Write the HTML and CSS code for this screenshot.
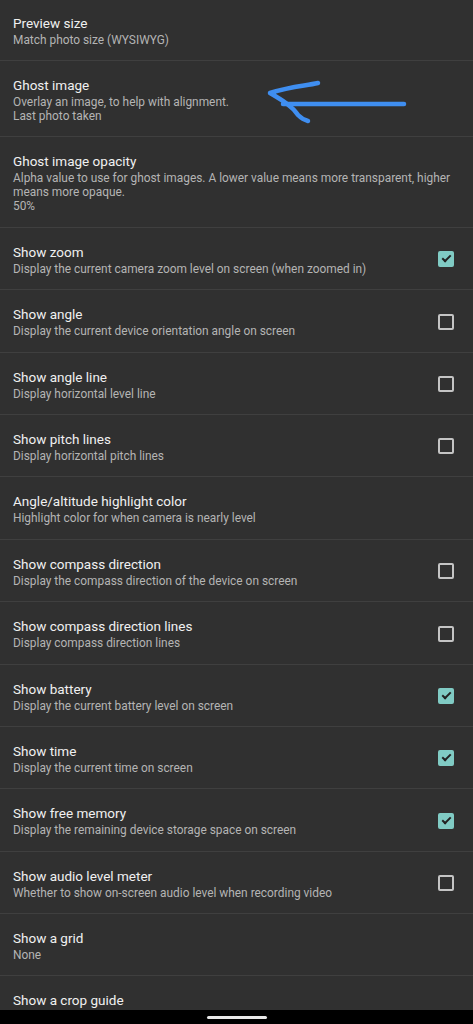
FILE: index.html
```html
<!DOCTYPE html>
<html>
<head>
<meta charset="utf-8">
<link rel="stylesheet" href="styles.css">
</head>
<body>
<div class="list">
  <div class="row first"><div class="text"><div class="title">Preview size</div><div class="summary">Match photo size (WYSIWYG)</div></div></div>
  <div class="row"><div class="text"><div class="title">Ghost image</div><div class="summary">Overlay an image, to help with alignment.<br>Last photo taken</div></div></div>
  <div class="row"><div class="text"><div class="title">Ghost image opacity</div><div class="summary">Alpha value to use for ghost images. A lower value means more transparent, higher means more opaque.<br>50%</div></div></div>
  <div class="row"><div class="text"><div class="title">Show zoom</div><div class="summary">Display the current camera zoom level on screen (when zoomed in)</div></div><span class="cb on"></span></div>
  <div class="row"><div class="text"><div class="title">Show angle</div><div class="summary">Display the current device orientation angle on screen</div></div><span class="cb"></span></div>
  <div class="row"><div class="text"><div class="title">Show angle line</div><div class="summary">Display horizontal level line</div></div><span class="cb"></span></div>
  <div class="row"><div class="text"><div class="title">Show pitch lines</div><div class="summary">Display horizontal pitch lines</div></div><span class="cb"></span></div>
  <div class="row"><div class="text"><div class="title">Angle/altitude highlight color</div><div class="summary">Highlight color for when camera is nearly level</div></div></div>
  <div class="row"><div class="text"><div class="title">Show compass direction</div><div class="summary">Display the compass direction of the device on screen</div></div><span class="cb"></span></div>
  <div class="row"><div class="text"><div class="title">Show compass direction lines</div><div class="summary">Display compass direction lines</div></div><span class="cb"></span></div>
  <div class="row"><div class="text"><div class="title">Show battery</div><div class="summary">Display the current battery level on screen</div></div><span class="cb on"></span></div>
  <div class="row"><div class="text"><div class="title">Show time</div><div class="summary">Display the current time on screen</div></div><span class="cb on"></span></div>
  <div class="row"><div class="text"><div class="title">Show free memory</div><div class="summary">Display the remaining device storage space on screen</div></div><span class="cb on"></span></div>
  <div class="row"><div class="text"><div class="title">Show audio level meter</div><div class="summary">Whether to show on-screen audio level when recording video</div></div><span class="cb"></span></div>
  <div class="row"><div class="text"><div class="title">Show a grid</div><div class="summary">None</div></div></div>
  <div class="row"><div class="text"><div class="title">Show a crop guide</div><div class="summary">None</div></div></div>
</div>
<svg class="arrow" width="473" height="140" viewBox="0 0 473 140">
  <path d="M283 104 L404 104" />
  <path d="M318 83 C305 86 292 86 270 93 C282 100 292 106 298 115 C301 118 304 120 308 121" />
</svg>
<div class="navbar"><span class="pill"></span></div>
</body>
</html>
```
FILE: styles.css
```css
html, body {
  margin: 0;
  padding: 0;
  background: #303030;
  overflow: hidden;
}
body {
  width: 473px;
  height: 1024px;
  font-family: Roboto, "Noto Sans", sans-serif;
  position: relative;
}
.list {
  margin-top: -1.4px;
}
.row {
  display: flex;
  align-items: center;
  padding: 14px 12px 13.4px 13px;
  border-bottom: 1px solid #3f3f3f;
}
.text {
  flex: 1;
  min-width: 0;
}
.title {
  font-size: 13.5px;
  line-height: 20px;
  color: #f0f0f0;
}
.summary {
  font-size: 11.9px;
  line-height: 14px;
  color: #b4b4b4;
}
.cb {
  flex: none;
  width: 16px;
  height: 16px;
  box-sizing: border-box;
  border: 2px solid #c4c4c4;
  border-radius: 2px;
  margin-left: 16px;
  margin-right: 7px;
  margin-top: 1px;
  position: relative;
}
.cb.on {
  background: #80cbc4;
  border-color: #80cbc4;
}
.cb.on::after {
  content: "";
  position: absolute;
  left: 4px;
  top: 0px;
  width: 3px;
  height: 7px;
  border-right: 2px solid #222;
  border-bottom: 2px solid #222;
  transform: rotate(45deg);
}
.arrow {
  position: absolute;
  left: 0;
  top: 0;
  fill: none;
  stroke: #3f8ef0;
  stroke-width: 4.5;
  stroke-linecap: round;
  stroke-linejoin: round;
}
.navbar {
  position: absolute;
  left: 0;
  bottom: 0;
  width: 473px;
  height: 14px;
  background: #000;
  display: flex;
  justify-content: center;
  align-items: flex-start;
}
.pill {
  margin-top: 6px;
  width: 60px;
  height: 3px;
  border-radius: 2px;
  background: #e8e8e8;
}
```
